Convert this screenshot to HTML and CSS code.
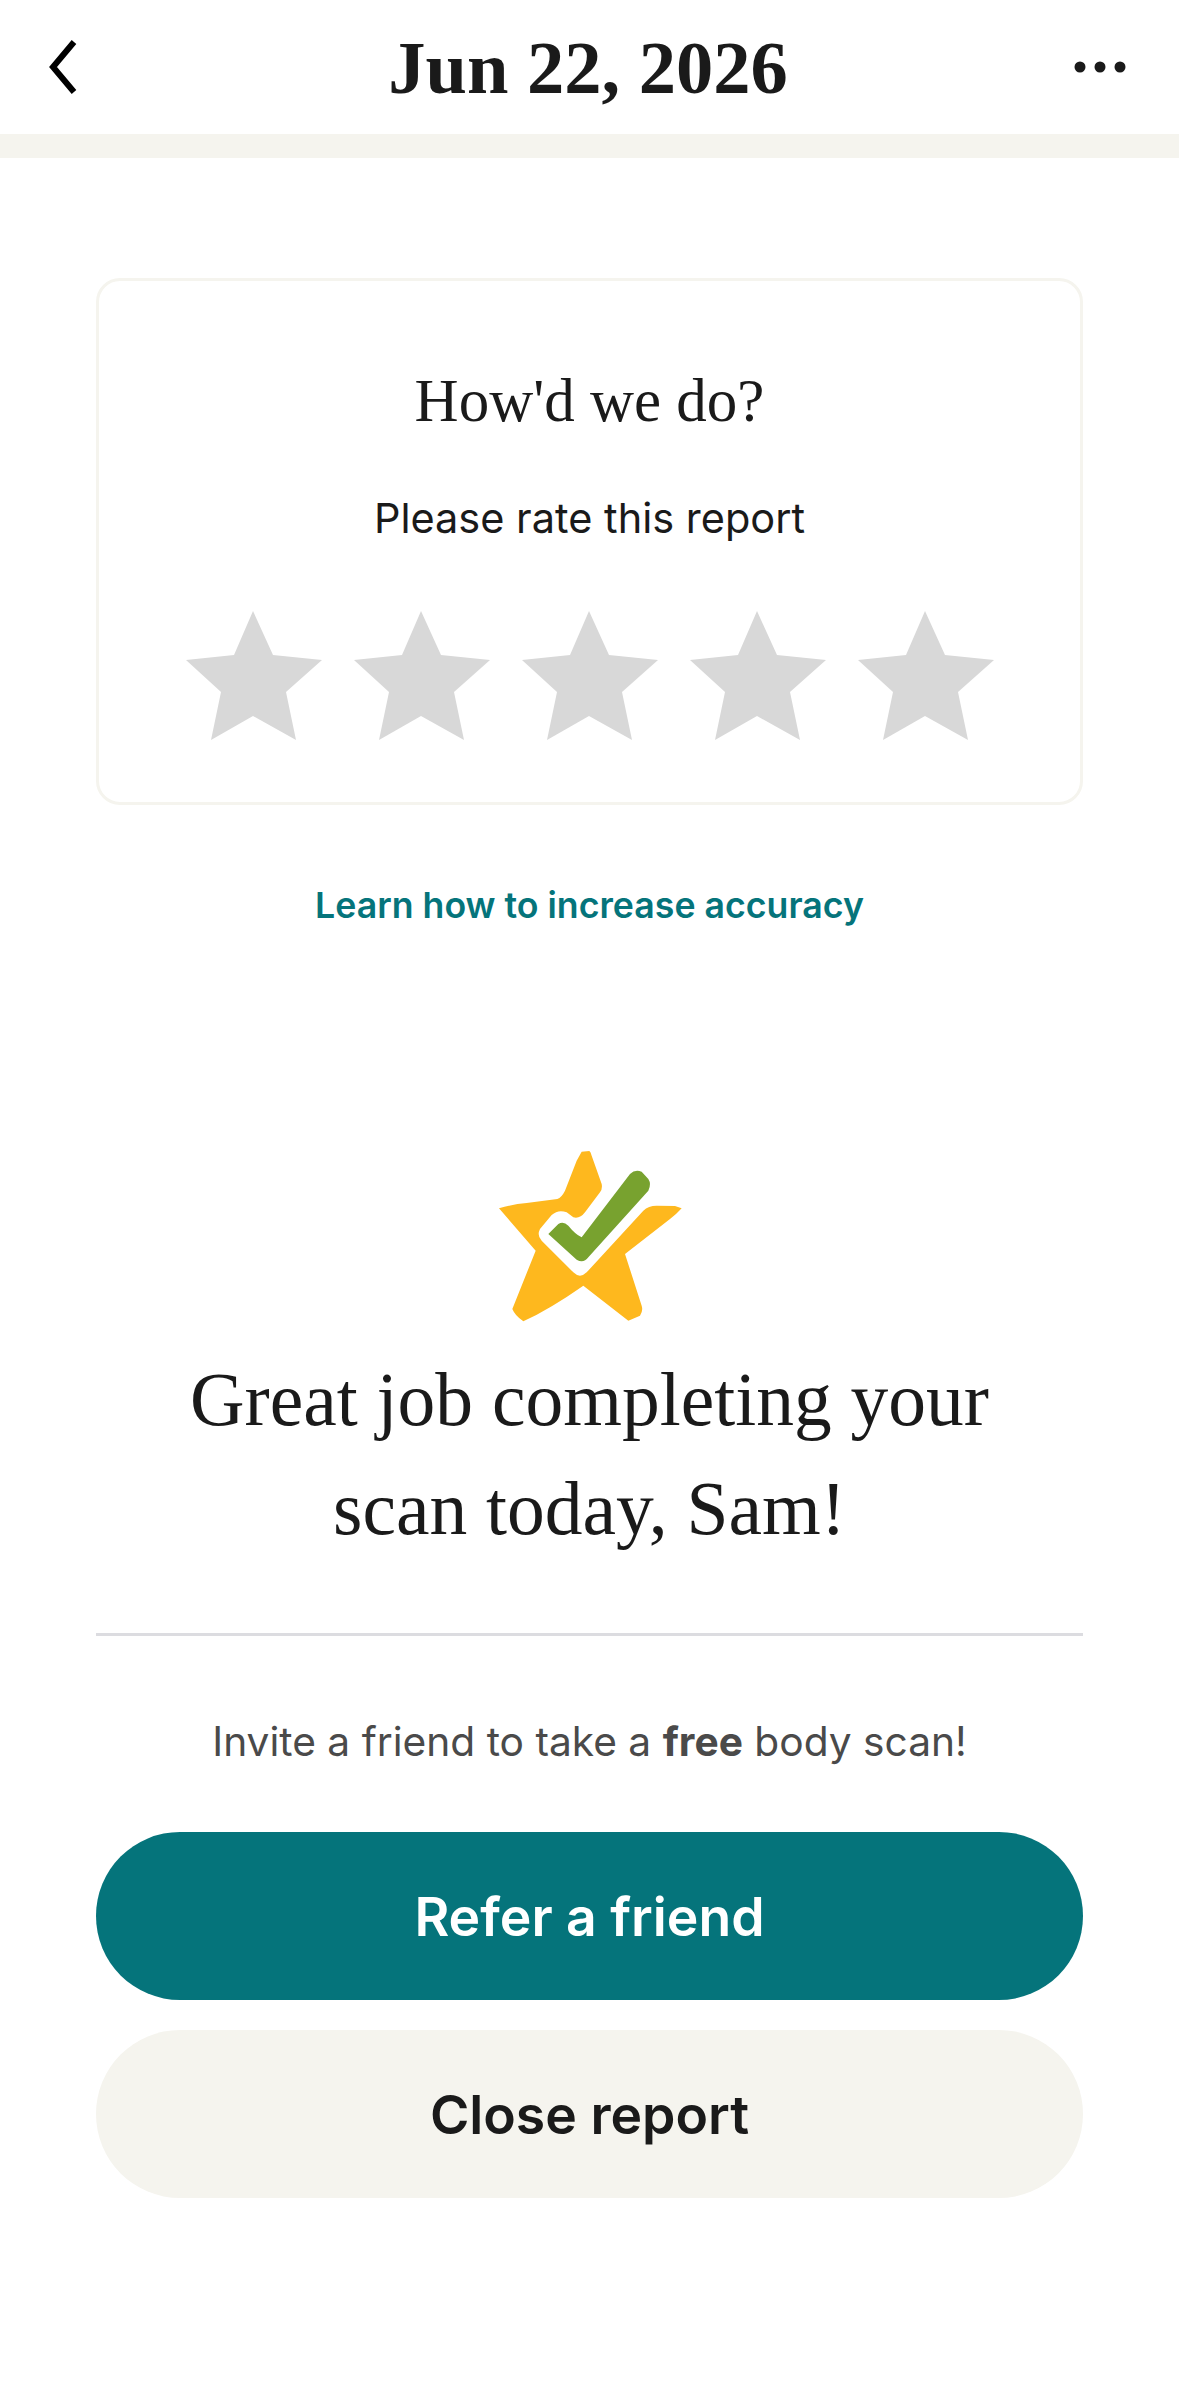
FILE: index.html
```html
<!DOCTYPE html>
<html lang="en">
<head>
  <meta charset="UTF-8">
  <title>Scan report</title>
  <link rel="stylesheet" href="styles.css">
</head>
<body>
  <header class="topbar">
    <svg class="back" viewBox="0 0 36 60" aria-hidden="true"><polyline points="29,5 8,30 29,55"/></svg>
    <h1>Jun 22, 2026</h1>
    <svg class="more" viewBox="0 0 52 12" aria-hidden="true">
      <circle cx="6" cy="6" r="5.5"/><circle cx="26" cy="6" r="5.5"/><circle cx="46" cy="6" r="5.5"/>
    </svg>
  </header>
  <div class="band"></div>

  <main class="content">
    <section class="rating">
      <h2>How'd we do?</h2>
      <p>Please rate this report</p>
      <div class="stars">
        <svg viewBox="0 0 136 129"><polygon points="67,0 87,44 136,49 100,81 110,129 67,105 25,129 35,81 0,49 48,44"/></svg>
        <svg viewBox="0 0 136 129"><polygon points="67,0 87,44 136,49 100,81 110,129 67,105 25,129 35,81 0,49 48,44"/></svg>
        <svg viewBox="0 0 136 129"><polygon points="67,0 87,44 136,49 100,81 110,129 67,105 25,129 35,81 0,49 48,44"/></svg>
        <svg viewBox="0 0 136 129"><polygon points="67,0 87,44 136,49 100,81 110,129 67,105 25,129 35,81 0,49 48,44"/></svg>
        <svg viewBox="0 0 136 129"><polygon points="67,0 87,44 136,49 100,81 110,129 67,105 25,129 35,81 0,49 48,44"/></svg>
      </div>
    </section>

    <a class="learn" href="#">Learn how to increase accuracy</a>

    <svg class="badge" viewBox="0 0 720 630" aria-hidden="true">
      <path fill="#feb81e" d="M335 68 L358 66 Q362 68 365 80 L395 165 Q398 180 390 190 L345 250 Q330 270 310 265 L290 250 Q265 240 245 258 L210 300 Q200 320 215 335 L310 430 Q330 450 350 430 L520 245 Q535 230 560 230 L615 231 L635 238 Q620 255 600 270 L465 375 L515 530 Q520 545 510 560 L475 575 L340 470 Q240 540 160 577 Q135 560 127 540 L197 365 L87 238 Q130 225 170 222 L262 210 Q275 205 285 185 L320 95 Z"/>
      <path fill="#78a22f" d="M235 315 L265 285 Q280 275 295 290 Q315 315 335 325 L480 135 Q495 120 515 128 L535 150 Q545 165 535 185 L355 385 Q340 405 320 392 Z"/>
    </svg>

    <h2 class="congrats">Great job completing your<br>scan today, Sam!</h2>

    <hr class="divider">

    <p class="invite">Invite a friend to take a <strong>free</strong> body scan!</p>

    <button class="btn btn-primary">Refer a friend</button>
    <button class="btn btn-secondary">Close report</button>
  </main>
</body>
</html>
```

FILE: styles.css
```css
* {
  box-sizing: border-box;
}

body {
  margin: 0;
  height: 2396px;
  background: #fff;
  font-family: 'Inter', sans-serif;
  color: #1a1a1a;
  overflow: hidden;
}

.topbar {
  height: 134px;
  padding: 0 53px 0 45px;
  display: grid;
  grid-template-columns: 1fr auto 1fr;
  align-items: center;
}

.topbar h1 {
  margin: 0;
  padding: 3px 0 0 5px;
  font-family: 'Liberation Serif', serif;
  font-size: 74.5px;
  font-weight: 700;
  line-height: 131px;
}

.back {
  width: 36px;
  height: 60px;
  fill: none;
  stroke: #000;
  stroke-width: 6;
}

.more {
  width: 52px;
  height: 12px;
  fill: #1a1a1a;
  justify-self: end;
}

.band {
  height: 24px;
  background: #f5f4ee;
}

.content {
  padding: 120px 96px 0;
  display: flex;
  flex-direction: column;
  align-items: center;
  text-align: center;
}

.rating {
  width: 100%;
  height: 527px;
  padding-top: 85px;
  border: 3px solid #f5f4ee;
  border-radius: 24px;
}

.rating h2 {
  margin: 0;
  font-family: 'Liberation Serif', serif;
  font-size: 61px;
  font-weight: 400;
  line-height: 70px;
}

.rating p {
  margin: 58px 0 0;
  font-size: 41.5px;
  line-height: 48px;
  color: #1a1a1a;
}

.stars {
  margin-top: 69px;
  display: flex;
  justify-content: center;
  gap: 32px;
}

.stars svg {
  width: 136px;
  height: 129px;
  fill: #d8d8d8;
}

.learn {
  margin-top: 77px;
  font-size: 35.7px;
  font-weight: 600;
  line-height: 46px;
  color: #05747b;
  text-decoration: none;
}

.badge {
  margin-top: 201px;
  width: 240px;
  height: 210px;
}

.congrats {
  margin: 6px 0 0;
  font-family: 'Liberation Serif', serif;
  font-size: 75.5px;
  font-weight: 400;
  line-height: 109px;
}

.divider {
  width: 100%;
  height: 3px;
  margin: 70px 0 0;
  border: 0;
  background: #dcdce0;
}

.invite {
  margin: 82px 0 0;
  font-size: 40.7px;
  line-height: 48px;
  color: #4a4a4a;
}

.invite strong {
  font-weight: 700;
}

.btn {
  width: 100%;
  height: 168px;
  border: 0;
  border-radius: 84px;
  font-family: inherit;
  font-size: 53.5px;
  font-weight: 600;
}

.btn-primary {
  margin-top: 66px;
  background: #05747b;
  color: #fff;
}

.btn-secondary {
  margin-top: 30px;
  background: #f5f4ee;
  color: #1a1a1a;
}
```
